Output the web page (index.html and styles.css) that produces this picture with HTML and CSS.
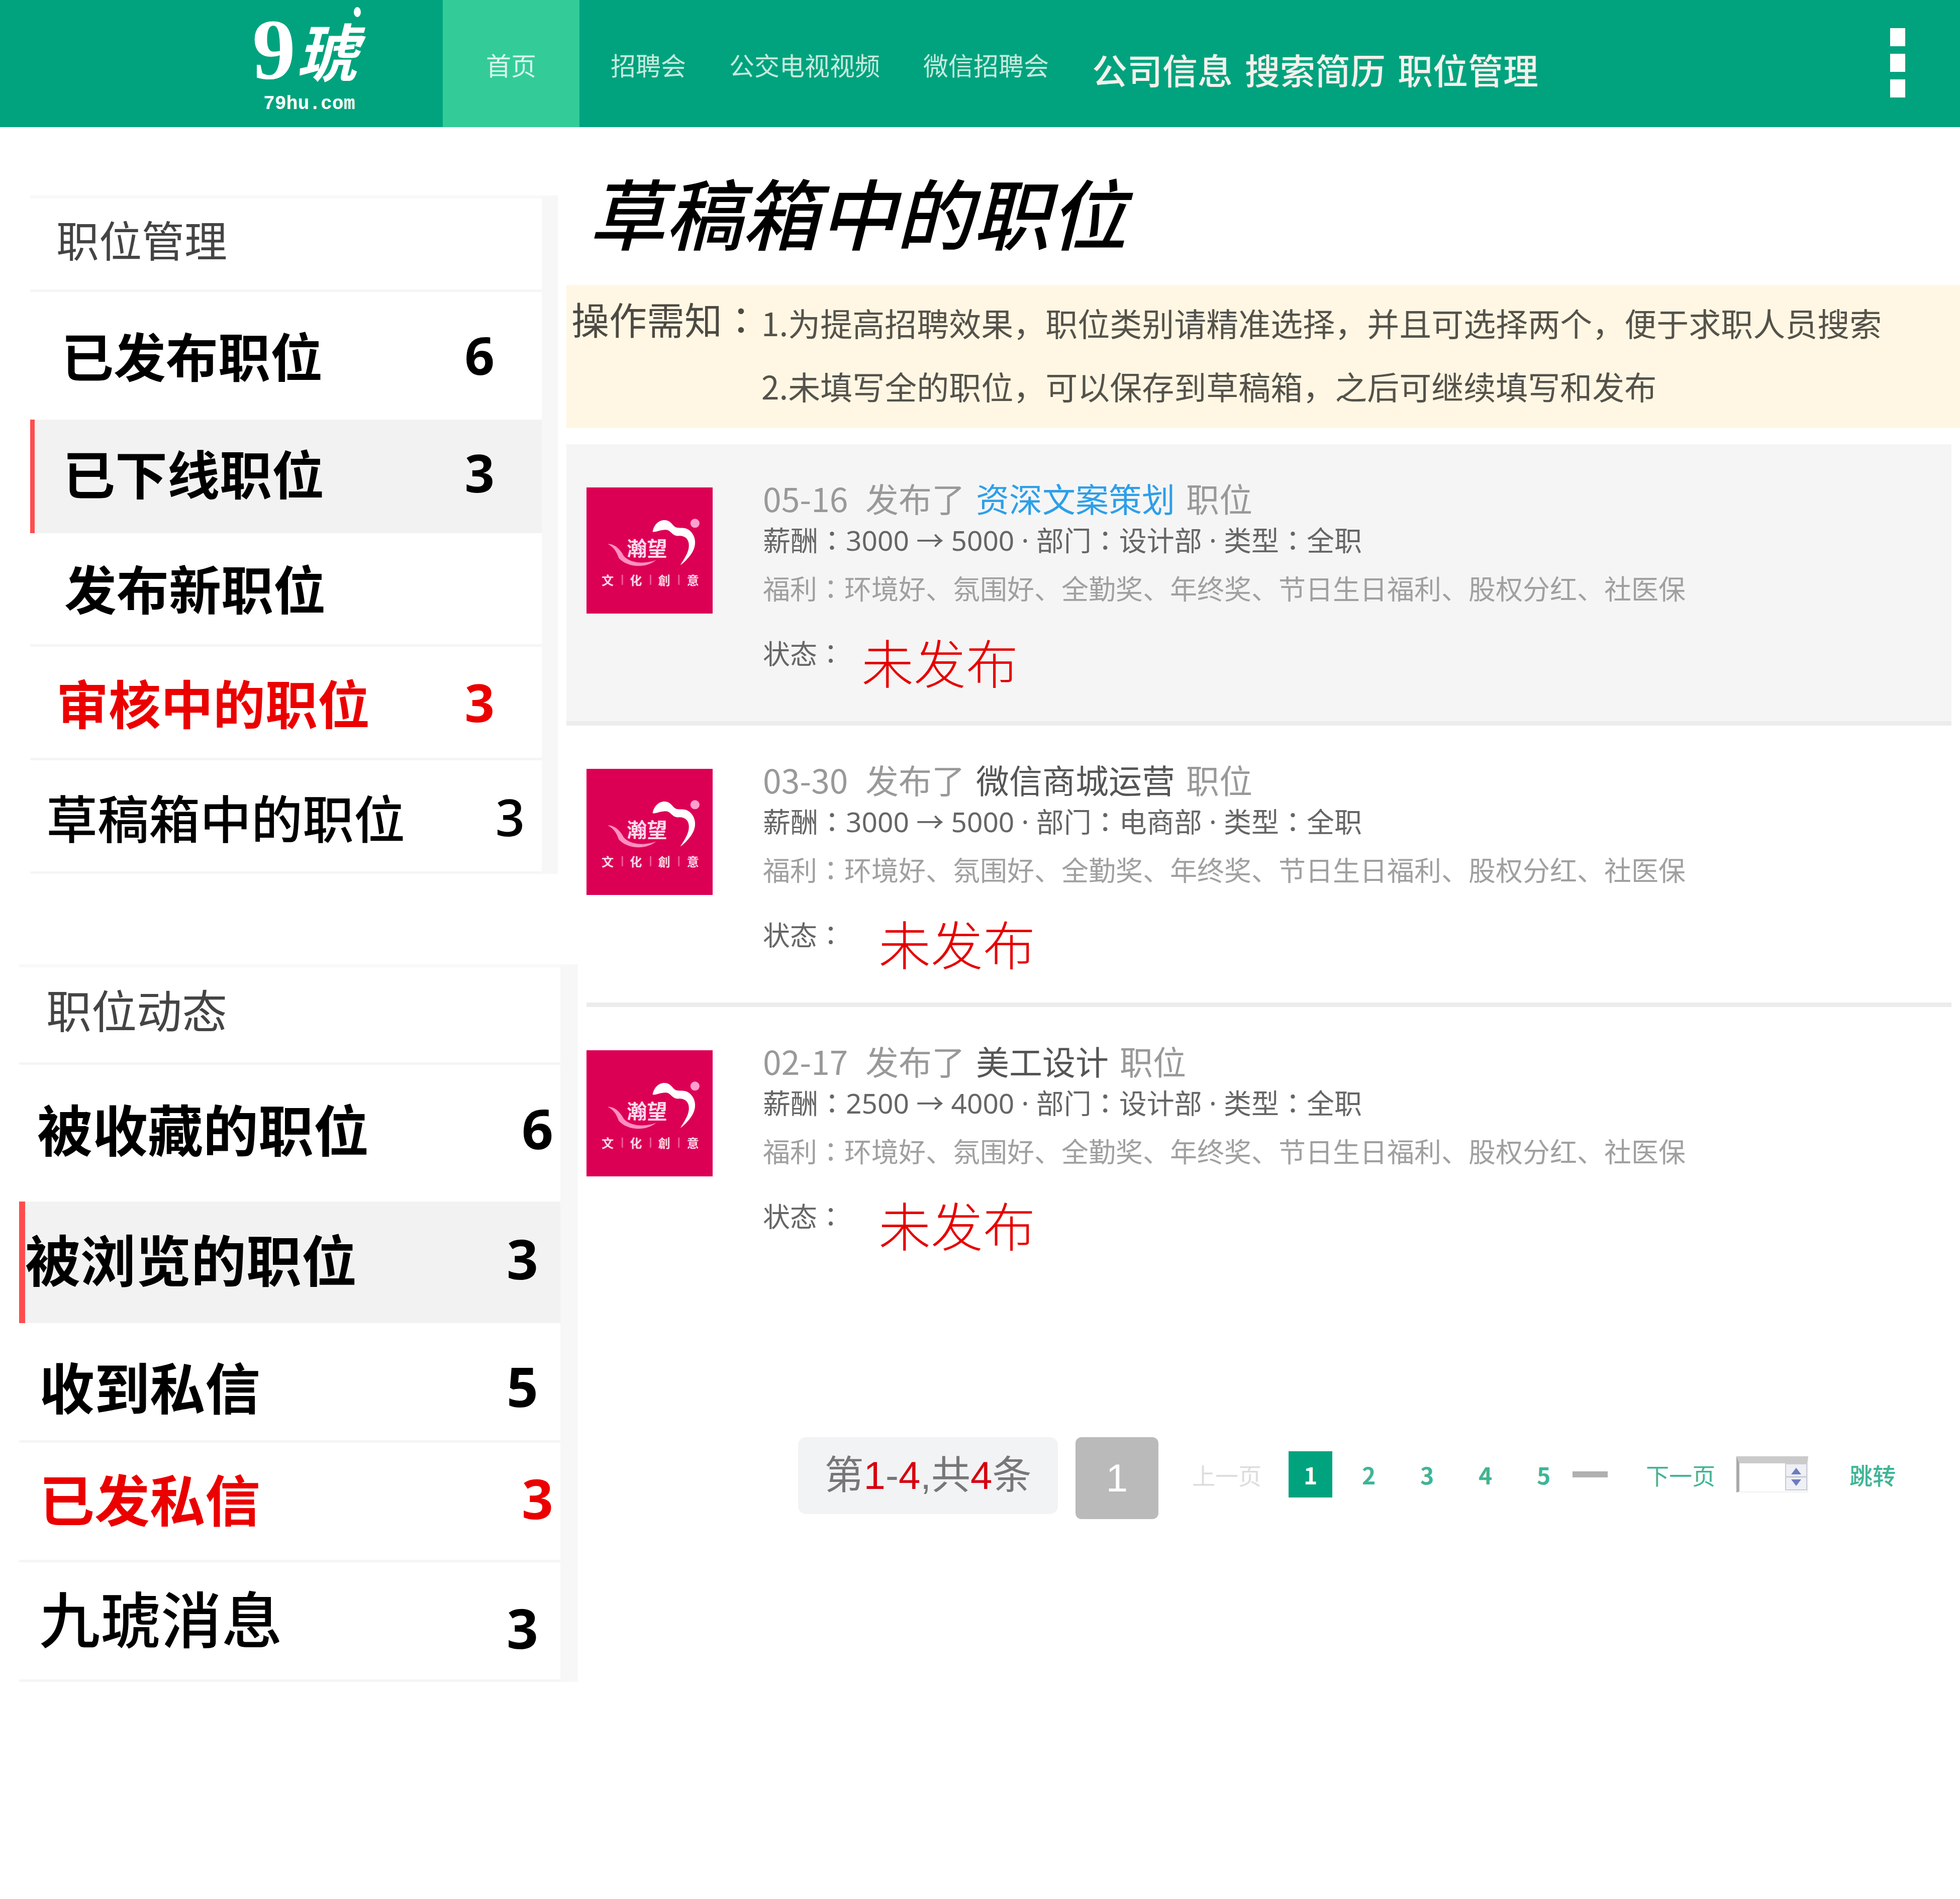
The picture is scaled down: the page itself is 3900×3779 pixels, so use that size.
FILE: index.html
```html
<!DOCTYPE html>
<html lang="zh-CN">
<head>
<meta charset="utf-8">
<meta name="viewport" content="width=device-width, initial-scale=1">
<title>草稿箱中的职位</title>
<link rel="stylesheet" href="styles.css">
</head>
<body>
<header class="topbar">
  <a class="brand" href="#">
    <span class="brand-name"><span class="brand-nine">9</span><span class="brand-hu">琥</span></span>
    <span class="brand-url">79hu.com</span>
    <span class="brand-dot"></span>
  </a>
  <nav class="nav">
    <a class="nav-home" href="#">首页</a>
    <div class="nav-minor">
      <a href="#">招聘会</a>
      <a href="#">公交电视视频</a>
      <a href="#">微信招聘会</a>
    </div>
    <div class="nav-major">
      <a href="#">公司信息</a>
      <a href="#">搜索简历</a>
      <a href="#">职位管理</a>
    </div>
  </nav>
  <button class="more" type="button" aria-label="更多"><span></span><span></span><span></span></button>
</header>

<div class="layout">
  <aside class="sidebar">
    <section class="panel">
      <h2 class="panel-title">职位管理</h2>
      <ul class="menu">
        <li class="tall"><a href="#"><span>已发布职位</span><b>6</b></a></li>
        <li class="selected"><a href="#"><span>已下线职位</span><b>3</b></a></li>
        <li><a href="#"><span>发布新职位</span></a></li>
        <li class="alert"><a href="#"><span>审核中的职位</span><b>3</b></a></li>
        <li class="wide light"><a href="#"><span>草稿箱中的职位</span><b>3</b></a></li>
      </ul>
    </section>
    <section class="panel panel-news">
      <h2 class="panel-title">职位动态</h2>
      <ul class="menu">
        <li class="tall wide"><a href="#"><span>被收藏的职位</span><b>6</b></a></li>
        <li class="selected"><a href="#"><span>被浏览的职位</span><b>3</b></a></li>
        <li><a href="#"><span>收到私信</span><b>5</b></a></li>
        <li class="alert wide"><a href="#"><span>已发私信</span><b>3</b></a></li>
        <li class="large"><a href="#"><span>九琥消息</span><b>3</b></a></li>
      </ul>
    </section>
  </aside>

  <main class="content">
    <h1 class="page-title">草稿箱中的职位</h1>

    <section class="notice">
      <h2 class="notice-label">操作需知<i lang="ja">：</i></h2>
      <div class="notice-items">
        <p>1.为提高招聘效果，职位类别请精准选择，并且可选择两个，便于求职人员搜索</p>
        <p>2.未填写全的职位，可以保存到草稿箱，之后可继续填写和发布</p>
      </div>
    </section>

    <article class="job job-active">
      <svg class="job-logo" viewBox="0 0 250 250" role="img" aria-label="公司标志">
        <g id="company">
          <rect width="250" height="250" fill="#dc0055"/>
          <path d="M131 88c3-18 18-27 30-22 8 3 10 10 16 13 7 3 18-2 28 7 14 13 14 34-2 52-6 7-12 13-17 16 7-12 17-25 17-39 0-14-9-20-21-19-12 1-15-12-25-12-12 0-17 5-26 4z" fill="#fff"/>
          <circle cx="215" cy="71" r="9" fill="#ff9fd0"/>
          <path d="M42 112c14-1 26 12 32 24 12 14 40 17 64 8-22 18-58 14-74-4-4-12-10-22-22-28z" fill="#ff8fc0"/>
          <g fill="#ffd9ea" font-family="Noto Sans CJK SC, sans-serif" font-weight="700">
            <text x="80" y="135" font-size="40">瀚望</text>
            <g font-size="24">
              <text x="30" y="193">文</text>
              <text x="86" y="193">化</text>
              <text x="142" y="193">創</text>
              <text x="199" y="193">意</text>
            </g>
          </g>
          <path d="M71 173v20M127 173v20M183 173v20" stroke="#f0569a" stroke-width="3"/>
        </g>
      </svg>
      <div class="job-body">
        <h3><time>05-16</time><span>发布了</span><a href="#">资深文案策划</a><span>职位</span></h3>
        <p class="job-meta">薪酬<i lang="ja">：</i>3000 → 5000 · 部门<i lang="ja">：</i>设计部 · 类型<i lang="ja">：</i>全职</p>
        <p class="job-perks">福利<i lang="ja">：</i>环境好、氛围好、全勤奖、年终奖、节日生日福利、股权分红、社医保</p>
        <p class="job-status"><span>状态<i lang="ja">：</i></span><strong>未发布</strong></p>
      </div>
    </article>
    <article class="job">
      <svg class="job-logo" viewBox="0 0 250 250" role="img" aria-label="公司标志"><use href="#company"/></svg>
      <div class="job-body">
        <h3><time>03-30</time><span>发布了</span><a href="#">微信商城运营</a><span>职位</span></h3>
        <p class="job-meta">薪酬<i lang="ja">：</i>3000 → 5000 · 部门<i lang="ja">：</i>电商部 · 类型<i lang="ja">：</i>全职</p>
        <p class="job-perks">福利<i lang="ja">：</i>环境好、氛围好、全勤奖、年终奖、节日生日福利、股权分红、社医保</p>
        <p class="job-status"><span>状态<i lang="ja">：</i></span><strong>未发布</strong></p>
      </div>
    </article>
    <article class="job">
      <svg class="job-logo" viewBox="0 0 250 250" role="img" aria-label="公司标志"><use href="#company"/></svg>
      <div class="job-body">
        <h3><time>02-17</time><span>发布了</span><a href="#">美工设计</a><span>职位</span></h3>
        <p class="job-meta">薪酬<i lang="ja">：</i>2500 → 4000 · 部门<i lang="ja">：</i>设计部 · 类型<i lang="ja">：</i>全职</p>
        <p class="job-perks">福利<i lang="ja">：</i>环境好、氛围好、全勤奖、年终奖、节日生日福利、股权分红、社医保</p>
        <p class="job-status"><span>状态<i lang="ja">：</i></span><strong>未发布</strong></p>
      </div>
    </article>

    <nav class="pager" aria-label="分页">
      <p class="pager-total">第<em>1</em>-<em>4</em>,共<em>4</em>条</p>
      <button class="pager-box" type="button">1</button>
      <div class="pager-links">
        <a class="prev" href="#">上一页</a>
        <div class="pages">
          <a class="current" href="#">1</a>
          <a href="#">2</a>
          <a href="#">3</a>
          <a href="#">4</a>
          <a href="#">5</a>
        </div>
        <span class="dash"></span>
        <a class="next" href="#">下一页</a>
        <span class="jump">
          <input type="text" aria-label="页码">
          <svg viewBox="0 0 44 54" aria-hidden="true"><rect x="1" y="1" width="42" height="52" fill="#eef0f5" stroke="#c9cbd3" stroke-width="2"/><path d="M1 27h42" stroke="#c9cbd3" stroke-width="3"/><path d="M22 9l10 13H12zM22 45l10-13H12z" fill="#6c7cc0"/></svg>
        </span>
        <button class="go" type="button">跳转</button>
      </div>
    </nav>
  </main>
</div>
</body>
</html>
```

FILE: styles.css
```css
* { box-sizing: border-box; }

body {
  margin: 0;
  background: #fff;
  color: #000;
  font-family: "Noto Sans CJK SC", sans-serif;
}

h1, h2, h3, p, ul { margin: 0; padding: 0; }
ul { list-style: none; }
a { color: inherit; text-decoration: none; }
button { border: 0; padding: 0; background: none; font: inherit; color: inherit; }

/* Full-width colon, centred in its square */
i { font-family: "Noto Sans CJK JP", sans-serif; font-style: normal; }

/* Top bar */
.topbar {
  display: flex;
  height: 253px;
  background: #00a37e;
  color: #fff;
}

.brand {
  position: relative;
  display: flex;
  flex-direction: column;
  width: 881px;
  padding: 16px 0 0 502px;
}
.brand-name { display: flex; align-items: center; height: 164px; }
.brand-nine { font: 700 172px/164px "Liberation Serif", serif; }
.brand-hu { font-size: 124px; font-style: italic; font-weight: 700; line-height: 156px; }
.brand-url { padding-left: 22px; font: 700 38px/54px "Liberation Mono", monospace; }
.brand-dot {
  position: absolute;
  top: 14px;
  left: 704px;
  width: 14px;
  height: 20px;
  border-radius: 50%;
  background: #fff;
}

.nav { display: flex; flex: 1; }
.nav-home {
  width: 272px;
  background: #33cc99;
  color: #d9f7ea;
  font-size: 50px;
  line-height: 256px;
  text-align: center;
}
.nav-minor {
  display: flex;
  gap: 86px;
  padding-left: 62px;
  color: #c5ebdf;
  font-size: 50px;
  line-height: 256px;
}
.nav-major {
  display: flex;
  gap: 24px;
  padding-left: 86px;
  color: #f4f1ec;
  font-size: 70px;
  font-weight: 500;
  line-height: 276px;
}

.more {
  display: flex;
  flex-direction: column;
  align-items: center;
  gap: 15px;
  width: 248px;
  padding-top: 56px;
}
.more span { width: 30px; height: 36px; background: #fff; }

/* Layout */
.layout { display: grid; grid-template-columns: 1127px 1fr; }

/* Sidebar */
.sidebar { padding-top: 136px; }

.panel {
  margin: 0 17px 0 60px;
  border-top: 6px solid #f8f8f8;
  border-right: 32px solid #f7f7f7;
  font-size: 104px;
}
.panel-title {
  height: 186px;
  padding-left: 52px;
  border-bottom: 5px solid #f5f5f5;
  color: #444;
  font-size: 85px;
  font-weight: 400;
  line-height: 160px;
}
.menu li { height: 226px; border-bottom: 5px solid #f5f5f5; }
.menu a {
  display: flex;
  justify-content: space-between;
  padding: 0 94px 0 68px;
  font-weight: 700;
  line-height: 216px;
}
.menu b { font-family: "Open Sans", sans-serif; font-weight: 700; }
.menu .tall { height: 254px; border-bottom: 0; }
.menu .tall a { padding-left: 62px; line-height: 250px; }
.menu .selected { border-bottom: 0; border-left: 9px solid #ff4d4d; background: #f2f2f2; }
.menu .selected a { padding-left: 56px; line-height: 210px; }
.menu .alert { color: #eb0000; }
.menu .alert a { padding-left: 52px; line-height: 220px; }
.menu .wide a { padding-right: 34px; }
.menu .light a { padding-left: 32px; font-size: 102px; font-weight: 500; line-height: 224px; }
.menu .light b { font-weight: 600; }

.panel-news {
  margin: 180px -23px 0 38px;
  border-right-width: 35px;
  font-size: 110px;
}
.panel-news .panel-title { height: 194px; padding-left: 54px; font-size: 90px; line-height: 164px; }
.panel-news .menu li { height: 238px; }
.panel-news .menu a { padding: 0 44px 0 40px; line-height: 248px; }
.panel-news .menu .tall { height: 272px; }
.panel-news .menu .tall a { padding-left: 36px; line-height: 250px; }
.panel-news .menu .wide a { padding-right: 14px; }
.panel-news .menu .selected { height: 242px; border-left-width: 12px; }
.panel-news .menu .selected a { padding-left: 0; line-height: 224px; }
.panel-news .menu .alert a { line-height: 218px; }
.panel-news .menu .large a { font-size: 121px; font-weight: 500; line-height: 216px; }
.panel-news .menu .large b { font-size: 110px; line-height: 258px; }

/* Content */
.page-title {
  height: 314px;
  padding-left: 44px;
  font-size: 153px;
  font-style: italic;
  font-weight: 500;
  line-height: 334px;
}

.notice {
  display: flex;
  height: 285px;
  padding: 4px 0 0 10px;
  background: #fff7e3;
  color: #4d4a44;
}
.notice-label { width: 378px; font-size: 75px; font-weight: 400; line-height: 126px; }
.notice-items { color: #55524b; font-size: 64px; line-height: 126px; padding-top: 7px; }

.job {
  display: flex;
  gap: 100px;
  height: 560px;
  margin-right: 17px;
  margin-left: 40px;
  border-bottom: 9px solid #ececec;
}
.job-active { margin-top: 32px; margin-left: 0; padding-left: 40px; background: #f5f5f5; }
.job:last-of-type { border-bottom-color: transparent; }
.job-logo { flex: none; width: 251px; height: 251px; margin-top: 86px; }
.job-body { padding-top: 66px; color: #666; font-size: 54px; }
.job h3 {
  display: flex;
  gap: 22px;
  color: #999;
  font-size: 66px;
  font-weight: 400;
  line-height: 80px;
}
.job time { width: 182px; }
.job h3 a { color: #555; }
.job-active h3 a { color: #2d9fe8; }
.job-meta { font-family: "Noto Sans", "Noto Sans CJK SC", sans-serif; font-size: 55px; line-height: 84px; }
.job-perks { color: #a0a0a0; line-height: 106px; }
.job-status { display: flex; gap: 68px; line-height: 152px; }
.job-active .job-status { gap: 34px; }
.job-status strong { color: #e60000; font-size: 104px; font-weight: 300; line-height: 186px; }

/* Pagination */
.pager {
  display: flex;
  align-items: flex-start;
  gap: 35px;
  margin-top: 296px;
  padding-left: 461px;
}
.pager-total {
  width: 517px;
  border-radius: 16px;
  background: #f1f3f5;
  color: #777;
  font: 78px/153px "Liberation Sans", "Noto Sans CJK SC", sans-serif;
  text-align: center;
}
.pager-total em { color: #d7000f; font-style: normal; }
.pager-box {
  width: 165px;
  border-radius: 12px;
  background: #bababa;
  color: #fff;
  font: 78px/163px "Liberation Sans", sans-serif;
}
.pager-links {
  display: flex;
  align-items: center;
  height: 148px;
  padding-left: 32px;
  color: #3db596;
  font-size: 46px;
}
.prev { color: #ddd; }
.pages { display: flex; gap: 29px; margin-left: 54px; font-weight: 700; }
.pages a { width: 87px; line-height: 92px; text-align: center; }
.pages .current { background: #00a37e; color: #fff; }
.dash { width: 70px; height: 12px; margin-left: 14px; background: #b0b0b0; }
.next { margin-left: 76px; }
.jump {
  display: flex;
  width: 143px;
  height: 72px;
  margin-left: 42px;
  border: 2px solid #f0f0f0;
  border-top: 14px solid #cacaca;
  border-left: 6px solid #aaa;
}
.jump input { flex: 1; min-width: 0; border: 0; padding: 0; background: #fff; font: inherit; }
.jump svg { width: 44px; height: 54px; }
.go { margin-left: 82px; font-weight: 500; }
```
